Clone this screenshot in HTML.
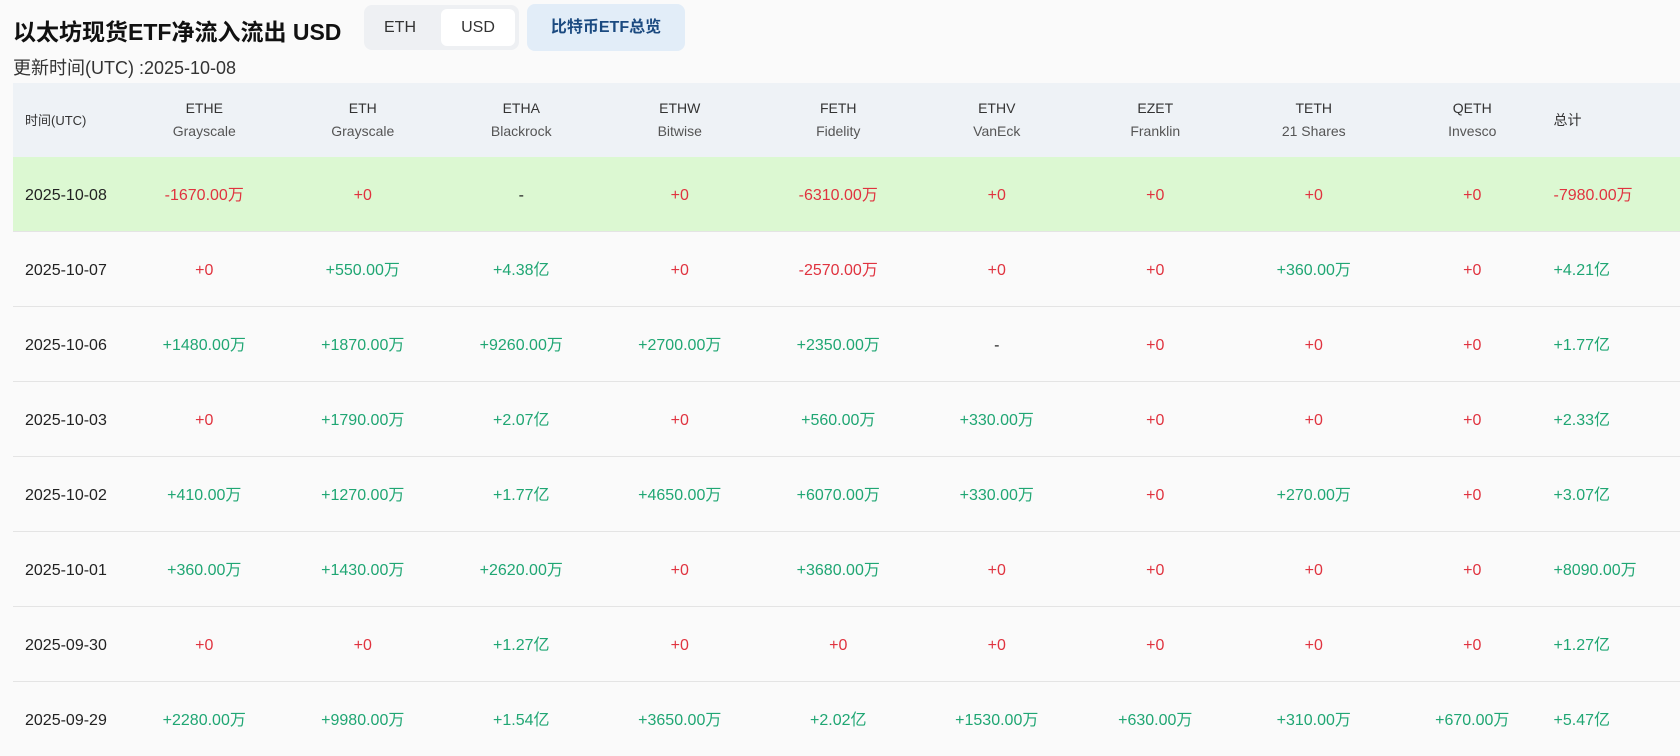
<!DOCTYPE html>
<html><head><meta charset="utf-8"><style>
body{margin:0;background:#fafafa;width:1680px;height:745px;overflow:hidden;font-family:"Liberation Sans","Noto Sans CJK SC",sans-serif;color:#222}
.title{position:absolute;left:13px;top:17px;font-size:23px;line-height:30px;font-weight:bold;color:#111}
.tog{position:absolute;left:364px;top:5px;width:155px;height:45px;background:#eef0f3;border-radius:8px}
.tog span{position:absolute;top:4px;height:37px;line-height:37px;font-size:16px;text-align:center;color:#333}
.blue{position:absolute;left:527px;top:4px;width:158px;height:47px;background:#e2edf8;border-radius:8px;line-height:47px;text-align:center;color:#1b4a80;font-weight:bold;font-size:16px}
.sub{position:absolute;left:13px;top:56px;font-size:18px;line-height:24px;color:#333}
table{position:absolute;left:13px;top:83px;border-collapse:collapse;width:1667px;table-layout:fixed}
th{background:#eef2f6;height:74px;font-weight:normal;font-size:14px;color:#333;line-height:23px;padding:0;vertical-align:middle}
th .s{color:#555}
td{height:70px;border-top:1px solid #e4e4e4;text-align:center;font-size:16px;line-height:20px;padding:4px 0 0 0;vertical-align:middle}
td:first-child,th:first-child{text-align:left;padding-left:12px}
td:last-child,th:last-child{text-align:left;padding-left:2px}
tr.hl td{background:#dcf8d2;border-top:none}
.r{color:#e0333f}.g{color:#1fa673}
</style></head><body>
<div class="title">以太坊现货ETF净流入流出 USD</div>
<div class="tog"><span style="left:4px;width:64px">ETH</span><span style="left:77px;width:74px;background:#fff;border-radius:6px">USD</span></div>
<div class="blue">比特币ETF总览</div>
<div class="sub">更新时间(UTC) :2025-10-08</div>
<table>
<colgroup><col style="width:112px"><col span="9" style="width:158.5px"><col></colgroup>
<tr><th style="font-size:13px">时间(UTC)</th><th>ETHE<br><span class="s">Grayscale</span></th><th>ETH<br><span class="s">Grayscale</span></th><th>ETHA<br><span class="s">Blackrock</span></th><th>ETHW<br><span class="s">Bitwise</span></th><th>FETH<br><span class="s">Fidelity</span></th><th>ETHV<br><span class="s">VanEck</span></th><th>EZET<br><span class="s">Franklin</span></th><th>TETH<br><span class="s">21 Shares</span></th><th>QETH<br><span class="s">Invesco</span></th><th>总计</th></tr>
<tr class="hl"><td>2025-10-08</td><td class="r">-1670.00万</td><td class="r">+0</td><td>-</td><td class="r">+0</td><td class="r">-6310.00万</td><td class="r">+0</td><td class="r">+0</td><td class="r">+0</td><td class="r">+0</td><td class="r">-7980.00万</td></tr>
<tr><td>2025-10-07</td><td class="r">+0</td><td class="g">+550.00万</td><td class="g">+4.38亿</td><td class="r">+0</td><td class="r">-2570.00万</td><td class="r">+0</td><td class="r">+0</td><td class="g">+360.00万</td><td class="r">+0</td><td class="g">+4.21亿</td></tr>
<tr><td>2025-10-06</td><td class="g">+1480.00万</td><td class="g">+1870.00万</td><td class="g">+9260.00万</td><td class="g">+2700.00万</td><td class="g">+2350.00万</td><td>-</td><td class="r">+0</td><td class="r">+0</td><td class="r">+0</td><td class="g">+1.77亿</td></tr>
<tr><td>2025-10-03</td><td class="r">+0</td><td class="g">+1790.00万</td><td class="g">+2.07亿</td><td class="r">+0</td><td class="g">+560.00万</td><td class="g">+330.00万</td><td class="r">+0</td><td class="r">+0</td><td class="r">+0</td><td class="g">+2.33亿</td></tr>
<tr><td>2025-10-02</td><td class="g">+410.00万</td><td class="g">+1270.00万</td><td class="g">+1.77亿</td><td class="g">+4650.00万</td><td class="g">+6070.00万</td><td class="g">+330.00万</td><td class="r">+0</td><td class="g">+270.00万</td><td class="r">+0</td><td class="g">+3.07亿</td></tr>
<tr><td>2025-10-01</td><td class="g">+360.00万</td><td class="g">+1430.00万</td><td class="g">+2620.00万</td><td class="r">+0</td><td class="g">+3680.00万</td><td class="r">+0</td><td class="r">+0</td><td class="r">+0</td><td class="r">+0</td><td class="g">+8090.00万</td></tr>
<tr><td>2025-09-30</td><td class="r">+0</td><td class="r">+0</td><td class="g">+1.27亿</td><td class="r">+0</td><td class="r">+0</td><td class="r">+0</td><td class="r">+0</td><td class="r">+0</td><td class="r">+0</td><td class="g">+1.27亿</td></tr>
<tr><td>2025-09-29</td><td class="g">+2280.00万</td><td class="g">+9980.00万</td><td class="g">+1.54亿</td><td class="g">+3650.00万</td><td class="g">+2.02亿</td><td class="g">+1530.00万</td><td class="g">+630.00万</td><td class="g">+310.00万</td><td class="g">+670.00万</td><td class="g">+5.47亿</td></tr>
</table>
</body></html>
